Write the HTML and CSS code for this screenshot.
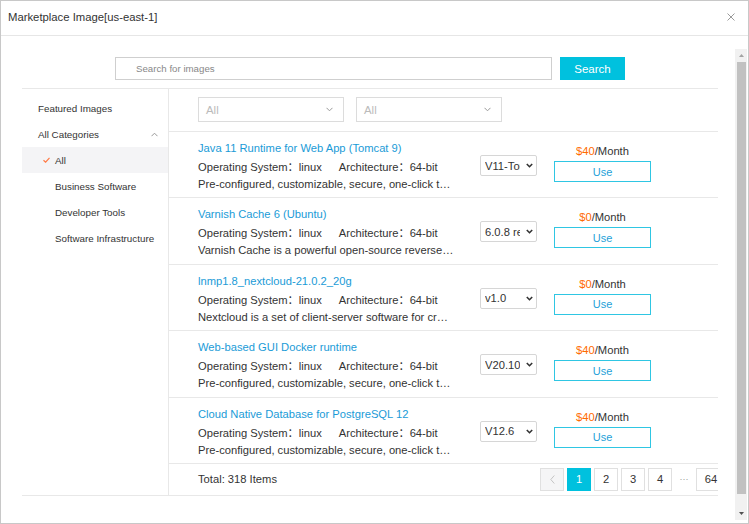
FILE: index.html
```html
<!DOCTYPE html>
<html lang="en">
<head>
<meta charset="utf-8">
<title>Marketplace Image</title>
<link rel="stylesheet" href="styles.css">
</head>
<body>
<div class="modal">
  <header class="modal-header">
    <span class="modal-title">Marketplace Image[us-east-1]</span>
    <svg class="close" width="8" height="8" viewBox="0 0 8 8"><path d="M0.5 0.5L7.5 7.5M7.5 0.5L0.5 7.5" stroke="#9a9a9a" stroke-width="1" fill="none"/></svg>
  </header>
  <div class="modal-body">
    <div class="scroll-area">
      <div class="search-row">
        <div class="search-input">Search for images</div>
        <button class="search-btn">Search</button>
      </div>
      <div class="main">
        <aside class="sidebar">
          <div class="side-item">Featured Images</div>
          <div class="side-item side-group"><span>All Categories</span><svg width="7" height="5" viewBox="0 0 7 5"><path d="M0.5 4.2L3.5 1.2L6.5 4.2" fill="none" stroke="#999" stroke-width="1"/></svg></div>
          <div class="side-item sub active"><svg class="check" width="7" height="6" viewBox="0 0 7 6"><path d="M0.5 3.2L2.6 5.2L6.5 0.8" fill="none" stroke="#ff7a45" stroke-width="1.2"/></svg><span>All</span></div>
          <div class="side-item sub">Business Software</div>
          <div class="side-item sub">Developer Tools</div>
          <div class="side-item sub">Software Infrastructure</div>
        </aside>
        <section class="list">
          <div class="filters">
            <div class="filter-select"><span>All</span><svg width="7" height="5" viewBox="0 0 7 5"><path d="M0.5 0.8L3.5 3.8L6.5 0.8" fill="none" stroke="#999" stroke-width="1"/></svg></div>
            <div class="filter-select"><span>All</span><svg width="7" height="5" viewBox="0 0 7 5"><path d="M0.5 0.8L3.5 3.8L6.5 0.8" fill="none" stroke="#999" stroke-width="1"/></svg></div>
          </div>

          <div class="item">
            <div class="item-info">
              <div class="item-title">Java 11 Runtime for Web App (Tomcat 9)</div>
              <div class="item-meta"><span class="meta-os">Operating System：linux</span><span>Architecture：64-bit</span></div>
              <div class="item-desc">Pre-configured, customizable, secure, one-click t…</div>
            </div>
            <div class="version"><span class="version-text">V11-Tomcat9</span><svg width="7" height="5" viewBox="0 0 7 5"><path d="M0.8 1L3.5 3.7L6.2 1" fill="none" stroke="#333" stroke-width="1.6"/></svg></div>
            <div class="buy"><div class="price"><span class="amount">$40</span>/Month</div><button class="use-btn">Use</button></div>
          </div>

          <div class="item">
            <div class="item-info">
              <div class="item-title">Varnish Cache 6 (Ubuntu)</div>
              <div class="item-meta"><span class="meta-os">Operating System：linux</span><span>Architecture：64-bit</span></div>
              <div class="item-desc">Varnish Cache is a powerful open-source reverse…</div>
            </div>
            <div class="version"><span class="version-text">6.0.8 release</span><svg width="7" height="5" viewBox="0 0 7 5"><path d="M0.8 1L3.5 3.7L6.2 1" fill="none" stroke="#333" stroke-width="1.6"/></svg></div>
            <div class="buy"><div class="price"><span class="amount">$0</span>/Month</div><button class="use-btn">Use</button></div>
          </div>

          <div class="item">
            <div class="item-info">
              <div class="item-title">lnmp1.8_nextcloud-21.0.2_20g</div>
              <div class="item-meta"><span class="meta-os">Operating System：linux</span><span>Architecture：64-bit</span></div>
              <div class="item-desc">Nextcloud is a set of client-server software for cr…</div>
            </div>
            <div class="version"><span class="version-text">v1.0</span><svg width="7" height="5" viewBox="0 0 7 5"><path d="M0.8 1L3.5 3.7L6.2 1" fill="none" stroke="#333" stroke-width="1.6"/></svg></div>
            <div class="buy"><div class="price"><span class="amount">$0</span>/Month</div><button class="use-btn">Use</button></div>
          </div>

          <div class="item">
            <div class="item-info">
              <div class="item-title">Web-based GUI Docker runtime</div>
              <div class="item-meta"><span class="meta-os">Operating System：linux</span><span>Architecture：64-bit</span></div>
              <div class="item-desc">Pre-configured, customizable, secure, one-click t…</div>
            </div>
            <div class="version"><span class="version-text">V20.10</span><svg width="7" height="5" viewBox="0 0 7 5"><path d="M0.8 1L3.5 3.7L6.2 1" fill="none" stroke="#333" stroke-width="1.6"/></svg></div>
            <div class="buy"><div class="price"><span class="amount">$40</span>/Month</div><button class="use-btn">Use</button></div>
          </div>

          <div class="item">
            <div class="item-info">
              <div class="item-title">Cloud Native Database for PostgreSQL 12</div>
              <div class="item-meta"><span class="meta-os">Operating System：linux</span><span>Architecture：64-bit</span></div>
              <div class="item-desc">Pre-configured, customizable, secure, one-click t…</div>
            </div>
            <div class="version"><span class="version-text">V12.6</span><svg width="7" height="5" viewBox="0 0 7 5"><path d="M0.8 1L3.5 3.7L6.2 1" fill="none" stroke="#333" stroke-width="1.6"/></svg></div>
            <div class="buy"><div class="price"><span class="amount">$40</span>/Month</div><button class="use-btn">Use</button></div>
          </div>

          <div class="list-footer">
            <span class="total">Total: 318 Items</span>
            <div class="pager">
              <span class="page prev"><svg width="5" height="9" viewBox="0 0 5 9"><path d="M4.3 0.5L0.8 4.5L4.3 8.5" fill="none" stroke="#c4c4c4" stroke-width="1"/></svg></span>
              <span class="page current">1</span>
              <span class="page">2</span>
              <span class="page">3</span>
              <span class="page">4</span>
              <span class="ellipsis">···</span>
              <span class="page wide">64</span>
            </div>
          </div>
        </section>
      </div>
    </div>
    <div class="scrollbar">
      <div class="sb-btn"><svg width="5" height="3" viewBox="0 0 5 3"><path d="M0 3L2.5 0L5 3Z" fill="#a3a3a3"/></svg></div>
      <div class="sb-thumb"></div>
      <div class="sb-track"></div>
      <div class="sb-btn"><svg width="5" height="3" viewBox="0 0 5 3"><path d="M0 0L5 0L2.5 3Z" fill="#505050"/></svg></div>
    </div>
  </div>
</div>
</body>
</html>
```
FILE: styles.css
```css
html, body {
  margin: 0;
  padding: 0;
  background: #fff;
}

body {
  font-family: "Liberation Sans", Arial, "Noto Sans CJK SC", sans-serif;
  color: #333;
}

.modal {
  width: 749px;
  height: 524px;
  box-sizing: border-box;
  border: 1px solid #c8c8c8;
  display: flex;
  flex-direction: column;
  overflow: hidden;
}

.modal-header {
  height: 35px;
  flex: none;
  box-sizing: border-box;
  border-bottom: 1px solid #e6e6e6;
  padding: 8px 13px 0 7px;
  display: flex;
  justify-content: space-between;
  align-items: flex-start;
}

.modal-title {
  font-size: 11.3px;
  line-height: 16px;
  color: #333;
}

.close {
  margin-top: 4px;
}

.modal-body {
  flex: 1;
  min-height: 0;
  display: flex;
  padding: 13px 1px 3px 0;
}

.scroll-area {
  flex: 1;
  min-width: 0;
  overflow: hidden;
  padding-top: 8px;
}

.search-row {
  margin: 0 17px 0 21px;
  display: flex;
  justify-content: center;
  gap: 8px;
}

.search-input {
  width: 437px;
  height: 23px;
  box-sizing: border-box;
  border: 1px solid #cfcfcf;
  padding-left: 20px;
  font-size: 9.7px;
  line-height: 21px;
  color: #888;
}

.search-btn {
  width: 65px;
  height: 23px;
  border: 0;
  padding: 0;
  background: #00c1de;
  color: #fff;
  font-family: "Liberation Sans", Arial, sans-serif;
  font-size: 11.5px;
}

.main {
  margin: 8px 17px 0 21px;
  border-top: 1px solid #e8e8e8;
  border-bottom: 1px solid #e8e8e8;
  display: flex;
}

.sidebar {
  width: 146px;
  flex: none;
  border-right: 1px solid #e8e8e8;
  padding-top: 6px;
}

.side-item {
  height: 26px;
  padding-left: 16px;
  display: flex;
  align-items: center;
  font-size: 9.8px;
  color: #333;
}

.side-group {
  justify-content: space-between;
  padding-right: 10px;
}

.side-item.sub {
  padding-left: 33px;
}

.side-item.active {
  padding-left: 21px;
  background: #f4f4f6;
}

.check {
  margin-right: 5px;
}

.list {
  flex: 1;
  min-width: 0;
  overflow: hidden;
}

.filters {
  height: 43px;
  box-sizing: border-box;
  padding: 8px 0 0 29px;
  border-bottom: 1px solid #e8e8e8;
  display: flex;
  gap: 12px;
}

.filter-select {
  width: 146px;
  height: 25px;
  box-sizing: border-box;
  border: 1px solid #dcdcdc;
  padding: 0 10px 0 7px;
  display: flex;
  align-items: center;
  justify-content: space-between;
  font-size: 11.4px;
  color: #bbb;
}

.item {
  display: flex;
  align-items: flex-start;
  padding: 7px 0 4.4px 29px;
  border-bottom: 1px solid #e8e8e8;
}

.item-info {
  width: 260px;
  flex: none;
  font-size: 11.2px;
  white-space: nowrap;
}

.item-title {
  line-height: 18px;
  margin-bottom: 1px;
  color: #1a9bd7;
}

.item-meta {
  line-height: 18px;
}

.meta-os {
  margin-right: 17px;
}

.item-desc {
  line-height: 17px;
  overflow: hidden;
}

.version {
  margin: 16px 0 0 22px;
  width: 57px;
  height: 21px;
  box-sizing: border-box;
  flex: none;
  border: 1px solid #d6d6d6;
  border-radius: 2px;
  padding-left: 4px;
  display: flex;
  align-items: center;
  font-size: 11.2px;
  color: #333;
}

.version-text {
  width: 35px;
  flex: none;
  overflow: hidden;
  white-space: nowrap;
}

.version svg {
  margin-left: 6px;
}

.buy {
  margin: 4px 0 0 17px;
  width: 97px;
  flex: none;
  display: flex;
  flex-direction: column;
  align-items: center;
}

.price {
  font-size: 11.2px;
  line-height: 16px;
  color: #333;
}

.amount {
  color: #ff6a00;
}

.use-btn {
  margin-top: 2px;
  width: 97px;
  height: 21px;
  box-sizing: border-box;
  border: 1px solid #2fc6e3;
  background: #fff;
  padding: 0;
  color: #259fd8;
  font-family: "Liberation Sans", Arial, sans-serif;
  font-size: 11px;
}

.list-footer {
  height: 31px;
  padding-left: 29px;
  display: flex;
  align-items: center;
}

.total {
  width: 342px;
  flex: none;
  font-size: 11.2px;
}

.pager {
  flex: none;
  display: flex;
  align-items: center;
  gap: 3px;
}

.page {
  width: 24px;
  height: 23px;
  box-sizing: border-box;
  border: 1px solid #e0e0e0;
  display: flex;
  align-items: center;
  justify-content: center;
  font-size: 11.2px;
  color: #333;
  background: #fff;
}

.page.prev {
  background: #f5f5f6;
}

.page.current {
  background: #00c1de;
  border-color: #00c1de;
  color: #fff;
}

.page.wide {
  width: 30px;
}

.ellipsis {
  width: 18px;
  text-align: center;
  font-size: 9px;
  color: #999;
}

.scrollbar {
  width: 12px;
  flex: none;
  display: flex;
  flex-direction: column;
  background: #f1f1f1;
}

.sb-btn {
  height: 13px;
  flex: none;
  display: flex;
  align-items: center;
  justify-content: center;
}

.sb-thumb {
  height: 432px;
  flex: none;
  margin: 0 1.5px;
  background: #c1c1c1;
}

.sb-track {
  flex: 1;
}
```
